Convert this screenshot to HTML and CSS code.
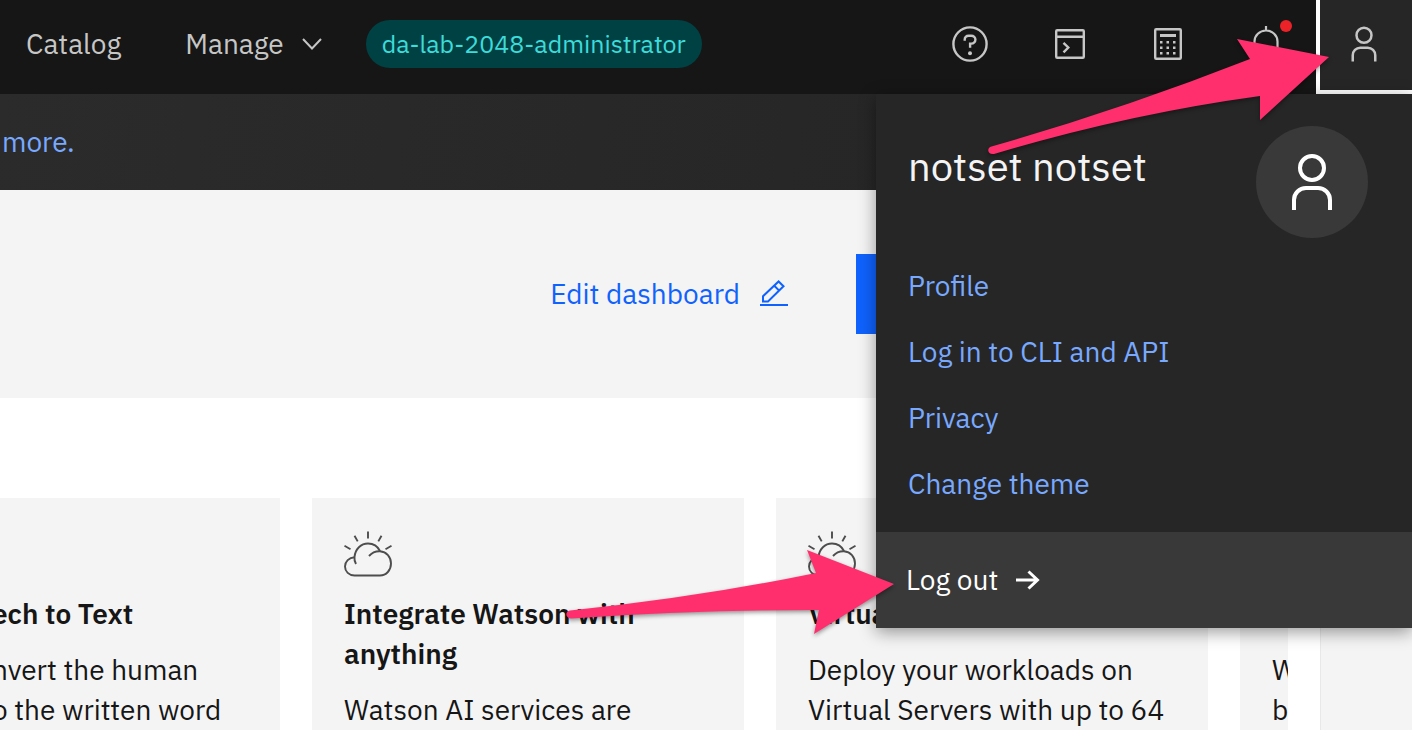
FILE: index.html
```html
<!DOCTYPE html>
<html lang="en">
<head>
<meta charset="utf-8">
<meta name="viewport" content="width=device-width, initial-scale=1">
<title>Dashboard</title>
<link rel="stylesheet" href="styles.css">
</head>
<body>
<svg class="defs" aria-hidden="true">
  <symbol id="user" viewBox="0 0 32 32"><path d="M16 4a5 5 0 1 1-5 5 5 5 0 0 1 5-5m0-2a7 7 0 1 0 7 7 7 7 0 0 0-7-7zM26 30h-2v-5a5 5 0 0 0-5-5h-6a5 5 0 0 0-5 5v5H6v-5a7 7 0 0 1 7-7h6a7 7 0 0 1 7 7z"/></symbol>
  <symbol id="cloud" viewBox="0 0 48 48"><g fill="none" stroke="currentColor" stroke-width="1.9"><path d="M24 1.500v7M10.500 5.800l3.200 5.600M37.500 5.800l-3.200 5.600M.5 15.700l6 3.500M47.500 15.700l-6 3.500"/><path d="M12 34c-1.300-2.200-1.800-4.500-1.500-7C11.200 19 17 13.500 24 13.500c5.200 0 9.600 2.700 12 7.500"/><path d="M25 26c2.800-3.200 6.500-5 11-4.800 6.500.5 11 5.800 11 12.300 0 6.700-4.700 12-11 12H10.500C5 45.500 1 41.500 1 36.500c0-5 4-9 9.500-9.300"/></g></symbol>
</svg>

<header class="topbar">
  <nav class="nav">
    <a class="nav-link" href="#">Catalog</a>
    <button class="nav-link nav-menu" type="button">Manage
      <svg class="chevron" viewBox="0 0 20 12"><path d="M1 1l9 9.500L19 1" fill="none" stroke="currentColor" stroke-width="2"/></svg>
    </button>
    <span class="tag">da-lab-2048-administrator</span>
  </nav>
  <div class="tools">
    <button class="tool" type="button" aria-label="Help">
      <svg class="icon" viewBox="0 0 40 40"><g fill="none" stroke="currentColor" stroke-width="2.400"><circle cx="18" cy="20" r="16.600"/><path d="M12.700 16.800v-1.200c0-2.300 1.500-3.900 3.900-3.900h2.600c2.500 0 4.200 1.700 4.200 3.900s-1.700 4-4.100 4h-1.200v4.200"/></g><circle cx="18" cy="29.200" r="2"/></svg>
    </button>
    <button class="tool" type="button" aria-label="Shell">
      <svg class="icon" viewBox="0 0 40 40"><g fill="none" stroke="currentColor" stroke-width="2.400"><rect x="6.200" y="6.200" width="27.600" height="27.600" rx="1"/><path d="M6 12.800h28M13.500 18.800l4.800 4.700-4.800 4.800"/></g></svg>
    </button>
    <button class="tool" type="button" aria-label="Cost estimator">
      <svg class="icon" viewBox="0 0 40 40"><rect x="7.200" y="5.200" width="25.600" height="29.600" rx="1" fill="none" stroke="currentColor" stroke-width="2.400"/><path d="M12 10h16v3H12zM12 17h2.500v2.500H12zM18.500 17H21v2.500h-2.500zM25 17h2.500v2.500H25zM12 22.500h2.500V25H12zM18.500 22.500H21V25h-2.500zM25 22.500h2.500V25H25zM12 28h2.500v2.500H12zM18.500 28H21v2.500h-2.500zM25 28h2.500v2.500H25z"/></svg>
    </button>
    <button class="tool tool-bell" type="button" aria-label="Notifications">
      <svg class="icon" viewBox="0 0 40 40"><path d="M20 2v4.500M8.500 26v-8.500a11.500 11 0 0 1 23 0V26l3.500 4H5z" fill="none" stroke="currentColor" stroke-width="2.200"/></svg>
      <span class="badge"></span>
    </button>
    <button class="tool tool-user" type="button" aria-label="Account" aria-expanded="true">
      <svg class="icon"><use href="#user"/></svg>
    </button>
  </div>

  <section class="account" aria-label="Account menu">
    <div class="account-head">
      <h2 class="account-name">notset notset</h2>
      <span class="avatar"><svg class="avatar-icon"><use href="#user"/></svg></span>
    </div>
    <div class="account-links">
      <a class="account-link" href="#">Profile</a>
      <a class="account-link" href="#">Log in to CLI and API</a>
      <a class="account-link" href="#">Privacy</a>
      <a class="account-link" href="#">Change theme</a>
    </div>
    <button class="logout" type="button">Log out
      <svg class="logout-icon" viewBox="0 0 24 20"><path d="M0 10h22M12.500 1.500l9 8.500-9 8.500" fill="none" stroke="currentColor" stroke-width="3"/></svg>
    </button>
  </section>
</header>

<div class="banner"><a class="banner-link" href="#">more.</a></div>

<div class="dash-head">
  <a class="edit" href="#">Edit dashboard
    <svg class="edit-icon" viewBox="0 0 28 28"><path d="M0 25h28M3 21.500v-5.200L18.600 1.500l4.900 4.700L8 21.500zM14.300 5.800l4.900 4.800" fill="none" stroke="currentColor" stroke-width="2"/></svg>
  </a>
  <button class="primary" type="button" aria-label="Create"></button>
</div>

<div class="body">
  <main class="cards">
    <article class="card card-first">
      <div class="card-space"></div>
      <h3 class="card-title">ech to Text</h3>
      <p class="card-text">nvert the human<br>o the written word</p>
    </article>
    <article class="card">
      <svg class="card-icon"><use href="#cloud"/></svg>
      <h3 class="card-title">Integrate Watson with anything</h3>
      <p class="card-text">Watson AI services are</p>
    </article>
    <article class="card">
      <svg class="card-icon"><use href="#cloud"/></svg>
      <h3 class="card-title">Virtual</h3>
      <p class="card-text">Deploy your workloads on Virtual Servers with up to 64</p>
    </article>
    <article class="card card-last">
      <div class="card-space"></div>
      <h3 class="card-title">&nbsp;</h3>
      <p class="card-text">W<br>b</p>
    </article>
  </main>
  <aside class="side"></aside>
</div>

<svg class="arrow arrow-account" viewBox="0 0 350 126" aria-hidden="true"><path d="M11.500 112.500Q140 76 270 25L257 5l92 18-69 63v-24Q148 80 14 120c-6 1-8-6-2.500-7.500z"/></svg>
<svg class="arrow arrow-logout" viewBox="0 0 336 94" aria-hidden="true"><path d="M10 66.500Q140 53 256 29l-9-23 87 34-80 50 5-24Q130 66 11 74.500c-6-.5-6-7.500-1-8z"/></svg>
</body>
</html>
```
FILE: styles.css
```css
* { box-sizing: border-box; }

body {
  margin: 0;
  height: 100vh;
  display: flex;
  flex-direction: column;
  overflow: hidden;
  background: #fff;
  color: #161616;
  font-family: "IBM Plex Sans", "Open Sans", sans-serif;
  font-size: 28px;
  line-height: 40px;
}

h2, h3, p { margin: 0; }
a { text-decoration: none; }
button {
  border: 0;
  padding: 0;
  background: none;
  color: inherit;
  font: inherit;
}
svg { display: block; flex: none; fill: currentColor; }
.defs { position: absolute; width: 0; height: 0; }

.topbar {
  position: relative;
  z-index: 2;
  flex: none;
  display: flex;
  justify-content: space-between;
  height: 94px;
  background: #161616;
  color: #c6c6c6;
}
.nav {
  display: flex;
  align-items: center;
  padding: 0 0 6px 26px;
}
.nav-link { color: #c6c6c6; }
.nav-menu {
  display: flex;
  align-items: center;
  gap: 18px;
  margin: 0 44px 0 64px;
}
.chevron { width: 20px; height: 12px; }
.tag {
  padding: 0 16px;
  border-radius: 24px;
  background: #004144;
  color: #3ddbd9;
  font-size: 25px;
  line-height: 48px;
}

.tools { display: flex; gap: 2px; }
.tool {
  display: flex;
  justify-content: center;
  width: 96px;
  padding-top: 24px;
}
.icon { width: 40px; height: 40px; }
.tool-bell { position: relative; }
.badge {
  position: absolute;
  top: 20px;
  right: 22px;
  width: 12px;
  height: 12px;
  border-radius: 50%;
  background: #eb2329;
}
.tool-user {
  border: solid #fff;
  border-width: 0 0 4px 4px;
  padding-right: 4px;
  background: #262626;
}

.account {
  position: absolute;
  top: 100%;
  right: 0;
  width: 536px;
  background: #262626;
  color: #f4f4f4;
  box-shadow: 0 4px 16px rgba(0, 0, 0, 0.4);
}
.account-head {
  display: flex;
  justify-content: space-between;
  padding: 32px 44px 15px 32px;
}
.account-name {
  padding-top: 16px;
  font-size: 40px;
  font-weight: 400;
  line-height: 48px;
}
.avatar {
  display: grid;
  place-items: center;
  width: 112px;
  height: 112px;
  border-radius: 50%;
  background: #393939;
  color: #fff;
}
.avatar-icon { width: 64px; height: 64px; }
.account-links {
  display: flex;
  flex-direction: column;
  padding: 0 32px 15px;
}
.account-link { color: #78a9ff; line-height: 66px; }
.logout {
  display: flex;
  align-items: center;
  gap: 18px;
  width: 100%;
  padding: 0 30px;
  background: #393939;
  color: #fff;
  line-height: 96px;
}
.logout-icon { width: 24px; height: 20px; }

.banner {
  flex: none;
  padding: 28px 2px;
  background: linear-gradient(100deg, #2b2b2b, #262626 70%);
}
.banner-link { display: block; color: #78a9ff; }

.dash-head {
  flex: none;
  display: flex;
  justify-content: flex-end;
  align-items: center;
  gap: 68px;
  padding: 64px 32px;
  background: #f4f4f4;
}
.edit {
  display: flex;
  align-items: center;
  gap: 20px;
  color: #0f62fe;
}
.edit-icon { width: 28px; height: 28px; }
.primary { width: 524px; height: 80px; background: #0f62fe; }

.body { flex: 1; display: flex; min-height: 0; }
.cards {
  flex: 1;
  display: grid;
  grid-template-columns: 280px 432px 432px 1fr;
  gap: 32px;
  min-width: 0;
  padding: 100px 32px 0 0;
}
.card {
  min-width: 0;
  overflow: hidden;
  padding: 32px;
  background: #f4f4f4;
}
.card-icon, .card-space { width: 48px; height: 48px; color: #4d4d4d; }
.card-title {
  margin: 16px 0;
  font-size: 28px;
  font-weight: 600;
  line-height: 40px;
}
.card-first { padding-left: 0; }
.card-first .card-title,
.card-first .card-text { margin-left: -8px; }
.card-last { padding-right: 0; }
.side {
  width: 92px;
  border-left: 1px solid #e8e8e8;
  background: #f4f4f4;
}

.arrow {
  position: absolute;
  z-index: 3;
  fill: #ff2f6d;
  filter: drop-shadow(0 2px 2px rgba(0, 0, 0, 0.4));
  overflow: visible;
  pointer-events: none;
}
.arrow-account { top: 34px; right: 82px; width: 350px; height: 126px; }
.arrow-logout { top: 544px; right: 516px; width: 336px; height: 94px; }
```
